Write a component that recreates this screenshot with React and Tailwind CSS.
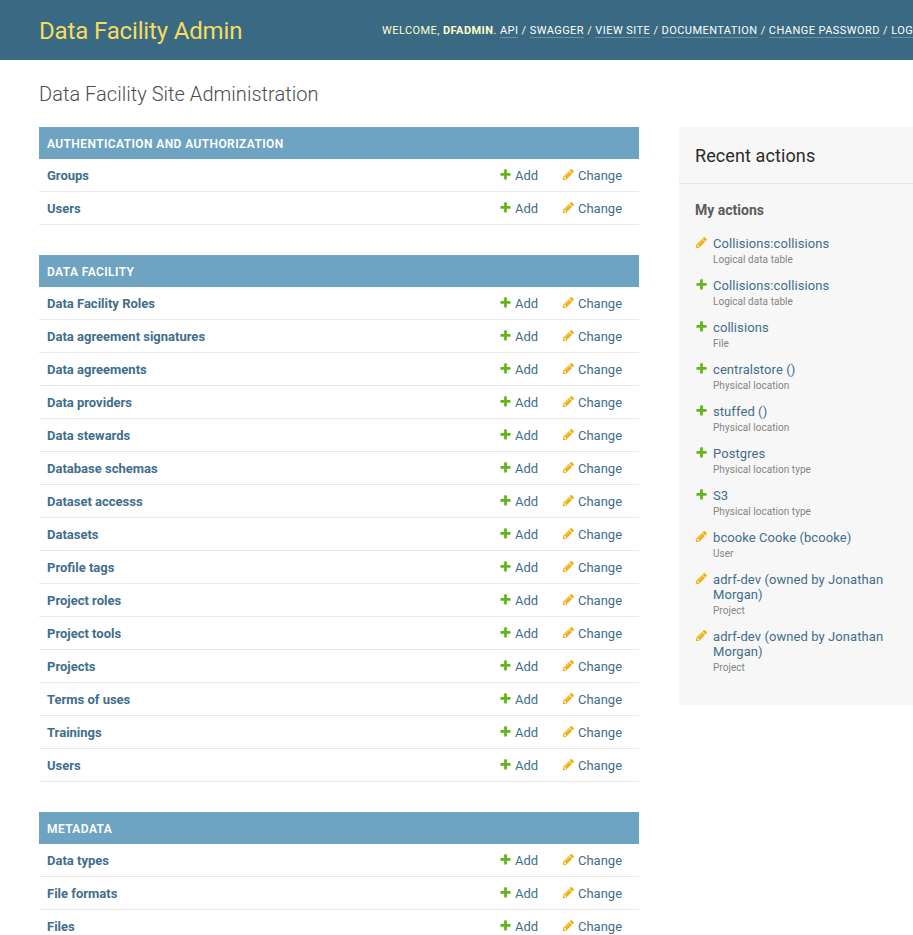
import React from 'react';

const PLUS =
  'M1600 796v192q0 40-28 68t-68 28h-416v416q0 40-28 68t-68 28h-192q-40 0-68-28t-28-68v-416h-416q-40 0-68-28t-28-68v-192q0-40 28-68t68-28h416v-416q0-40 28-68t68-28h192q40 0 68 28t28 68v416h416q40 0 68 28t28 68z';
const PENCIL =
  'M491 1536l91-91-235-235-91 91v107h128v128h107zm523-928q0-22-22-22-10 0-17 7l-542 542q-7 7-7 17 0 22 22 22 10 0 17-7l542-542q7-7 7-17zm-54-192l416 416-832 832h-416v-416zm683 96q0 53-37 90l-166 166-416-416 166-165q36-38 90-38 53 0 91 38l235 234q37 39 37 91z';

function Icon({ kind, className = '' }) {
  return (
    <svg viewBox="0 0 1792 1792" className={`h-[13px] w-[13px] shrink-0 ${className}`}>
      <path fill={kind === 'add' ? '#64b51d' : '#efb016'} d={kind === 'add' ? PLUS : PENCIL} />
    </svg>
  );
}

const MODULES = [
  { name: 'Authentication and Authorization', models: ['Groups', 'Users'] },
  {
    name: 'Data Facility',
    models: [
      'Data Facility Roles',
      'Data agreement signatures',
      'Data agreements',
      'Data providers',
      'Data stewards',
      'Database schemas',
      'Dataset accesss',
      'Datasets',
      'Profile tags',
      'Project roles',
      'Project tools',
      'Projects',
      'Terms of uses',
      'Trainings',
      'Users',
    ],
  },
  { name: 'Metadata', models: ['Data types', 'File formats', 'Files'] },
];

const ACTIONS = [
  ['change', 'Collisions:collisions', 'Logical data table'],
  ['add', 'Collisions:collisions', 'Logical data table'],
  ['add', 'collisions', 'File'],
  ['add', 'centralstore ()', 'Physical location'],
  ['add', 'stuffed ()', 'Physical location'],
  ['add', 'Postgres', 'Physical location type'],
  ['add', 'S3', 'Physical location type'],
  ['change', 'bcooke Cooke (bcooke)', 'User'],
  ['change', 'adrf-dev (owned by Jonathan Morgan)', 'Project'],
  ['change', 'adrf-dev (owned by Jonathan Morgan)', 'Project'],
];

const LINKS = ['API', 'Swagger', 'View site', 'Documentation', 'Change password', 'Log out'];

function Module({ name, models }) {
  return (
    <section className="mb-[30px] w-[600px]">
      <h2 className="h-8 bg-[#6fa3c2] px-2 text-[12px] leading-[34px] font-semibold tracking-[0.4px] text-white uppercase">
        {name}
      </h2>
      {models.map((m) => (
        <div key={m} className="flex h-[33px] items-center border-b border-[#e9e9e9] px-2 pt-[2px] text-[13px] leading-4 text-[#416e8b]">
          <a className="w-[452px] font-bold">{m}</a>
          <a className="flex w-[63px] items-center">
            <Icon kind="add" className="mr-[3px] mb-[3px]" />
            Add
          </a>
          <a className="flex items-center">
            <Icon kind="change" className="mr-[3px] mb-[3px]" />
            Change
          </a>
        </div>
      ))}
    </section>
  );
}

export default function App() {
  return (
    <div className="h-[935px] w-[913px] overflow-hidden bg-white font-[Roboto,sans-serif]">
      <header className="flex h-[60px] items-center bg-[#3a6a83] pt-[2px] pl-[39px]">
        <h1 className="w-[343px] shrink-0 text-[24px] leading-[30px] font-normal tracking-[-0.15px] text-[#f5dd5d]">
          Data Facility Admin
        </h1>
        <nav className="shrink-0 text-[11px] leading-4 tracking-[0.44px] whitespace-nowrap text-[#ffffcc] uppercase">
          Welcome, <strong className="font-bold">dfadmin</strong>.{' '}
          {LINKS.map((l, i) => (
            <React.Fragment key={l}>
              {i > 0 && ' / '}
              <a className="border-b border-white/25 text-white">{l}</a>
            </React.Fragment>
          ))}
        </nav>
      </header>
      <h1 className="mt-[22px] ml-[39px] h-[45px] text-[20px] leading-6 font-light tracking-[0.04px] text-[#4d4d4d]">
        Data Facility Site Administration
      </h1>
      <main className="flex items-start pl-[39px]">
        <div className="mr-10 shrink-0">
          {MODULES.map((m) => (
            <Module key={m.name} {...m} />
          ))}
        </div>
        <aside className="h-[578px] w-[260px] shrink-0 bg-[#f7f7f7]">
          <h2 className="h-[57px] border-b border-[#e7e7e7] px-4 pt-[17px] text-[18px] leading-6 tracking-[0.1px] text-[#2b2b2b]">
            Recent actions
          </h2>
          <h3 className="mt-[18px] mb-[18px] px-4 text-[14px] leading-4 font-bold text-[#5c5c5c]">My actions</h3>
          <ul className="pl-4">
            {ACTIONS.map(([kind, title, type], i) => (
              <li key={i} className="mb-3 flex">
                <Icon kind={kind} className="mr-[5px]" />
                <div className="w-[185px]">
                  <a className="block text-[13px] leading-[15px] tracking-[0.08px] text-[#416e8b]">{title}</a>
                  <span className="block h-[15px] pt-[2px] text-[10px] leading-[14px] tracking-[0.05px] text-[#858585]">{type}</span>
                </div>
              </li>
            ))}
          </ul>
        </aside>
      </main>
    </div>
  );
}
